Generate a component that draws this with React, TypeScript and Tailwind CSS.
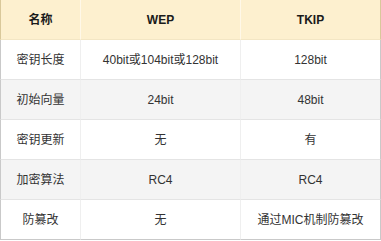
import React from "react";

const rows = [
  ["密钥长度", "40bit或104bit或128bit", "128bit"],
  ["初始向量", "24bit", "48bit"],
  ["密钥更新", "无", "有"],
  ["加密算法", "RC4", "RC4"],
  ["防篡改", "无", "通过MIC机制防篡改"],
];

export default function App() {
  return (
    <div
      className="w-[381px] h-[241px] bg-white text-[12px]"
      style={{ fontFamily: '"Liberation Sans", Arial, "Noto Sans CJK SC", sans-serif' }}
    >
      <div className="grid grid-cols-[81px_160px_140px] w-[381px]">
        <div className="h-[40px] flex items-center justify-center bg-[#fdf0cf] font-bold text-[#1a1a1a] border-l border-l-[#d9c89a] border-r border-r-[#fff8e8] border-b border-b-[#f3e6c4]">名称</div>
        <div className="h-[40px] flex items-center justify-center bg-[#fdf0cf] font-bold text-[#1a1a1a] border-r border-r-[#fff8e8] border-b border-b-[#f3e6c4]">WEP</div>
        <div className="h-[40px] flex items-center justify-center bg-[#fdf0cf] font-bold text-[#1a1a1a] border-r border-r-[#d9c89a] border-b border-b-[#f3e6c4]">TKIP</div>
        {rows.map((r, i) => {
          const bg = i % 2 === 1 ? "bg-[#f4f4f4]" : "bg-white";
          const last = i === rows.length - 1;
          const bb = last ? "border-b-[#c9c9c9]" : "border-b-[#e4e4e4]";
          return (
            <React.Fragment key={i}>
              <div className={`h-[40px] flex items-center justify-center text-[#333] border-l border-l-[#c9c9c9] border-r border-r-[#efefef] border-b ${bb} ${bg}`}>{r[0]}</div>
              <div className={`h-[40px] flex items-center justify-center text-[#333] border-r border-r-[#efefef] border-b ${bb} ${bg}`}>{r[1]}</div>
              <div className={`h-[40px] flex items-center justify-center text-[#333] border-r border-r-[#c9c9c9] border-b ${bb} ${bg}`}>{r[2]}</div>
            </React.Fragment>
          );
        })}
      </div>
    </div>
  );
}
